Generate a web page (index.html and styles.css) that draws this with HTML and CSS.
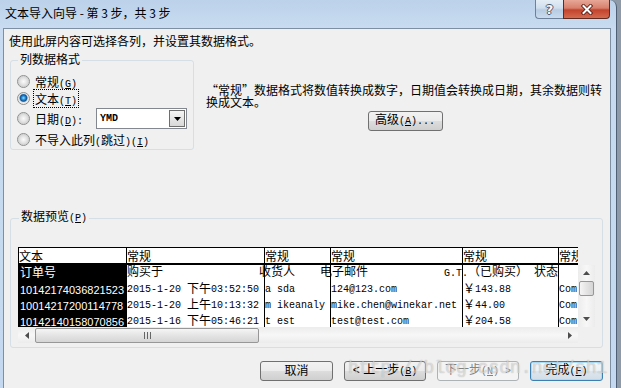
FILE: index.html
```html
<!DOCTYPE html>
<html lang="zh-CN">
<head>
    <meta charset="UTF-8">
    <meta name="viewport" content="width=device-width, initial-scale=1.0">
    <title>文本导入向导 - 第 3 步，共 3 步</title>
    <link rel="stylesheet" href="styles.css">
</head>
<body>

<div class="window">
    <div class="titlebar">
        <span class="title">文本导入向导 - 第 3 步，共 3 步</span>
        <div class="caption">
            <span class="cap-help">?</span>
            <span class="cap-close">
                <svg width="14" height="11" viewBox="0 0 14 11">
                    <path d="M3.5 2 L10.5 9 M10.5 2 L3.5 9" stroke="#5a1d15" stroke-width="3.8" stroke-linecap="square"/>
                    <path d="M3.5 2 L10.5 9 M10.5 2 L3.5 9" stroke="#fff" stroke-width="2" stroke-linecap="square"/>
                </svg>
            </span>
        </div>
    </div>

    <div class="client">
        <p class="intro">使用此屏内容可选择各列，并设置其数据格式。</p>

        <div class="format-row">
            <fieldset class="format-box">
                <legend>列数据格式</legend>
                <div class="opt">
                    <span class="radio"></span>
                    <span>常规<span class="key">(<u>G</u>)</span></span>
                </div>
                <div class="opt">
                    <span class="radio on"></span>
                    <span class="focus">文本<span class="key">(<u>T</u>)</span></span>
                </div>
                <div class="opt opt-date">
                    <span class="radio"></span>
                    <span class="date-label">日期<span class="key">(<u>D</u>):</span></span>
                    <div class="combo">
                        <span class="combo-text">YMD</span>
                        <span class="combo-btn">
                            <svg width="7" height="4" viewBox="0 0 7 4"><path d="M0 0h7L3.5 4z" fill="#000"/></svg>
                        </span>
                    </div>
                </div>
                <div class="opt opt-last">
                    <span class="radio"></span>
                    <span>不导入此列<span class="key">(</span>跳过<span class="key">)(<u>I</u>)</span></span>
                </div>
            </fieldset>

            <div class="format-note">
                <p>“常规”数据格式将数值转换成数字，日期值会转换成日期，其余数据则转<br>换成文本。</p>
                <button class="btn btn-adv">高级<span class="key">(<u>A</u>)...</span></button>
            </div>
        </div>

        <fieldset class="preview-box">
            <legend>数据预览<span class="key">(<u>P</u>)</span></legend>
            <div class="preview">
                <div class="preview-top">
                    <div class="grid-clip">
                        <div class="grid">
                            <div class="cell head">文本</div>
                            <div class="cell head">常规</div>
                            <div class="cell head">常规</div>
                            <div class="cell head">常规</div>
                            <div class="cell head">常规</div>
                            <div class="cell head">常规</div>

                            <div class="cell r1 sel"><span class="cj">订单号</span></div>
                            <div class="cell r1"><span class="cj">购买于</span><span class="cj push-recv">收货人</span></div>
                            <div class="cell r1"><span class="cj push-mail">电子邮件</span></div>
                            <div class="cell r1"><span class="push-gt">G.T.<span class="cj">（已购买）</span> <span class="cj">状态</span></span></div>
                            <div class="cell r1"></div>
                            <div class="cell r1"></div>

                            <div class="cell sel">10142174036821523</div>
                            <div class="cell">2015-1-20 <span class="cj">下午</span>03:52:50</div>
                            <div class="cell">a sda</div>
                            <div class="cell">124@123.com</div>
                            <div class="cell"><span class="cj">￥</span>143.88</div>
                            <div class="cell">Com</div>

                            <div class="cell sel">10014217200114778</div>
                            <div class="cell">2015-1-20 <span class="cj">上午</span>10:13:32</div>
                            <div class="cell">m ikeanaly</div>
                            <div class="cell">mike.chen@winekar.net</div>
                            <div class="cell"><span class="cj">￥</span>44.00</div>
                            <div class="cell">Com</div>

                            <div class="cell sel">10142140158070856</div>
                            <div class="cell">2015-1-16 <span class="cj">下午</span>05:46:21</div>
                            <div class="cell">t est</div>
                            <div class="cell">test@test.com</div>
                            <div class="cell"><span class="cj">￥</span>204.58</div>
                            <div class="cell">Com</div>
                        </div>
                    </div>
                    <div class="vscroll">
                        <span class="sb-arrow">
                            <svg width="7" height="4" viewBox="0 0 7 4"><path d="M0 4h7L3.5 0z" fill="#4d4d4d"/></svg>
                        </span>
                        <span class="vthumb"></span>
                        <span class="sb-fill"></span>
                        <span class="sb-arrow">
                            <svg width="7" height="4" viewBox="0 0 7 4"><path d="M0 0h7L3.5 4z" fill="#4d4d4d"/></svg>
                        </span>
                    </div>
                </div>
                <div class="preview-bottom">
                    <div class="hscroll">
                        <span class="sb-arrow h">
                            <svg width="4" height="7" viewBox="0 0 4 7"><path d="M4 0v7L0 3.5z" fill="#4d4d4d"/></svg>
                        </span>
                        <span class="hthumb">
                            <svg width="7" height="7" viewBox="0 0 7 7"><path d="M0.5 0v7M3.5 0v7M6.5 0v7" stroke="#666" stroke-width="1"/></svg>
                        </span>
                        <span class="sb-fill"></span>
                        <span class="sb-arrow h">
                            <svg width="4" height="7" viewBox="0 0 4 7"><path d="M0 0v7L4 3.5z" fill="#4d4d4d"/></svg>
                        </span>
                    </div>
                    <div class="sb-corner"></div>
                </div>
            </div>
        </fieldset>

        <div class="actions">
            <button class="btn btn-cancel">取消</button>
            <button class="btn btn-back">&lt; 上一步<span class="key">(<u>B</u>)</span></button>
            <button class="btn btn-next" disabled>下一步<span class="key">(<u>N</u>) &gt;</span></button>
            <button class="btn btn-finish">完成<span class="key">(<u>F</u>)</span></button>
        </div>

        <div class="watermark">http://blog.csdn.net/sh1</div>
    </div>
</div>

</body>
</html>
```

FILE: styles.css
```css
body {
    margin: 0;
    width: 621px;
    height: 388px;
    overflow: hidden;
    background-color: #8e9aa7;
    font-family: "Liberation Sans", "Noto Sans CJK SC", sans-serif;
    font-size: 12px;
    color: #000;
}

.window {
    width: 617px;
    height: 388px;
    box-sizing: border-box;
    border-right: 1px solid #4f6075;
    border-top-right-radius: 7px;
    background: linear-gradient(to bottom, #bcd2ea 0, #c8dbf0 28px, #c4d9ef 100%);
}

/* title bar */

.titlebar {
    height: 28px;
    display: flex;
    align-items: flex-start;
    padding: 0 6px 0 5px;
}

.title {
    padding-top: 6px;
    line-height: 14px;
    font-family: "Noto Sans CJK SC", sans-serif;
}

.caption {
    margin-left: auto;
    display: flex;
}

.cap-help,
.cap-close {
    height: 19px;
    box-sizing: border-box;
    display: flex;
    align-items: center;
    justify-content: center;
}

.cap-help {
    width: 28px;
    border: 1px solid #6d8198;
    border-top: none;
    border-right: none;
    border-bottom-left-radius: 4px;
    background: linear-gradient(to bottom, #e4edf6 0, #cfdeee 45%, #b7cbe2 55%, #c9dbee 100%);
    color: #f4f7fa;
    font-weight: bold;
    font-size: 13px;
    font-family: "DejaVu Sans", sans-serif;
    text-shadow: 1px 0 0 #4b5d72, -1px 0 0 #4b5d72, 0 1px 0 #4b5d72, 0 -1px 0 #4b5d72;
}

.cap-close {
    width: 47px;
    border: 1px solid #5e2a22;
    border-top: none;
    border-bottom-right-radius: 4px;
    background: linear-gradient(to bottom, #e7a797 0, #d7806c 45%, #c2432d 55%, #d46a4f 100%);
}

/* client area */

.client {
    position: relative;
    margin-left: 3px;
    width: 608px;
    height: 360px;
    box-sizing: border-box;
    border: 1px solid #7d8fa3;
    border-bottom: none;
    background-color: #f0f0f0;
}

.intro {
    margin: 0;
    padding: 6px 0 0 5px;
    line-height: 14px;
}

.key {
    font-family: "Liberation Mono", monospace;
    font-size: 10px;
}

.format-row {
    display: flex;
    align-items: flex-start;
    margin-top: 4px;
}

fieldset {
    margin: 0 0 0 6px;
    min-width: 0;
    box-sizing: border-box;
    border: 1px solid #d5dfe5;
    border-radius: 3px;
}

legend {
    margin-left: 1px;
    padding: 0 2px;
    line-height: 14px;
}

.format-box {
    width: 184px;
    padding: 6px 0 0 6px;
}

.opt {
    display: flex;
    align-items: center;
    height: 17px;
}

.opt-date {
    height: 23px;
}

.opt-last {
    height: 19px;
}

.radio {
    width: 13px;
    height: 13px;
    box-sizing: border-box;
    margin-right: 5px;
    border: 1px solid #8e8f8f;
    border-radius: 50%;
    background: radial-gradient(circle at 50% 50%, #fbfbfb 0, #e6e6e6 3px, #d4d4d4 5px, #f2f2f2 6px);
}

.radio.on {
    background: radial-gradient(circle at 50% 45%, #9fe0ff 0, #3196e0 1.6px, #0f5596 3.2px, #5a8bb8 3.8px, #e2e2e2 4.4px, #f2f2f2 6px);
}

.focus {
    margin-left: -2px;
    padding: 1px 2px;
    outline: 1px dotted #000;
    outline-offset: -1px;
}

.date-label {
    width: 61px;
}

.combo {
    width: 91px;
    height: 21px;
    box-sizing: border-box;
    display: flex;
    align-items: center;
    border: 1px solid #828790;
    background-color: #fff;
}

.combo-text {
    flex: 1;
    padding-left: 3px;
    font-family: "Liberation Mono", monospace;
    font-size: 10px;
    font-weight: bold;
}

.combo-btn {
    width: 16px;
    height: 17px;
    margin-right: 1px;
    box-sizing: border-box;
    display: flex;
    align-items: center;
    justify-content: center;
    border: 1px solid #6e6e6e;
    background: linear-gradient(to bottom, #f4f4f4, #d8d8d8);
}

.format-note {
    margin-left: 12px;
    padding-top: 31px;
    width: 398px;
}

.format-note p {
    margin: 0;
    line-height: 12px;
    white-space: nowrap;
    font-family: "Noto Sans CJK SC", sans-serif;
}

/* buttons */

.btn {
    height: 20px;
    padding: 0;
    box-sizing: border-box;
    border: 1px solid #707070;
    border-radius: 3px;
    background: linear-gradient(to bottom, #f2f2f2 0, #ebebeb 50%, #dddddd 51%, #cfcfcf 100%);
    font-family: "Liberation Sans", "Noto Sans CJK SC", sans-serif;
    font-size: 12px;
    line-height: 16px;
    color: #000;
}

.btn-adv {
    display: block;
    width: 75px;
    margin: 3px auto 0;
}

.actions {
    display: flex;
    justify-content: flex-end;
    gap: 11px;
    margin-top: 13px;
    padding-right: 7px;
}

.btn-cancel,
.btn-finish {
    width: 73px;
}

.btn-back,
.btn-next {
    width: 82px;
}

.btn-next {
    border-color: #adb2b5;
    background: #f4f4f4;
    color: #838383;
}

.btn-finish {
    border-color: #3c7fb1;
    box-shadow: inset 0 0 0 1px #a9dcf7;
    background: linear-gradient(to bottom, #f4f8fb 0, #eaf1f6 50%, #dde6ee 51%, #d2dde7 100%);
}

/* data preview */

.preview-box {
    width: 593px;
    margin-top: 60px;
    padding: 21px 0 4px 7px;
}

.preview {
    width: 577px;
}

.preview-top,
.preview-bottom {
    display: flex;
}

.grid-clip {
    width: 560px;
    height: 80px;
    overflow: hidden;
    background-color: #fff;
}

.grid {
    display: grid;
    grid-template-columns: 108px 138px 66px 132px 96px 60px;
    grid-template-rows: 18px 17px 16px 16px 16px;
}

.cell {
    border-left: 1px solid #000;
    white-space: nowrap;
    font-family: "Liberation Mono", "Noto Sans CJK SC", monospace;
    font-size: 10px;
    line-height: 16px;
}

.cj {
    font-family: "Noto Sans CJK SC", sans-serif;
    font-size: 12px;
    line-height: 8px;
    vertical-align: -1px;
}

.head {
    box-sizing: border-box;
    border-top: 1px solid #000;
    border-bottom: 2px solid #000;
    font-family: "Noto Sans CJK SC", sans-serif;
    font-size: 12px;
    line-height: 15px;
}

.r1 {
    line-height: 17px;
}

.r1 .cj {
    vertical-align: 0;
}

.sel {
    padding-left: 1px;
    background-color: #000;
    color: #fff;
    font-family: "Liberation Sans", sans-serif;
    font-size: 11px;
}

.push-recv {
    margin-left: 96px;
}

.push-mail {
    margin-left: 55px;
}

.push-gt {
    margin-left: 113px;
}

.vscroll {
    width: 17px;
    height: 62px;
    margin-top: 18px;
    display: flex;
    flex-direction: column;
    align-items: center;
    background: linear-gradient(to right, #ececec, #f7f7f7 50%, #ececec);
}

.hscroll {
    width: 560px;
    height: 16px;
    display: flex;
    align-items: center;
    background: linear-gradient(to bottom, #ececec, #f7f7f7 50%, #ececec);
}

.sb-arrow {
    width: 17px;
    height: 16px;
    flex: none;
    display: flex;
    align-items: center;
    justify-content: center;
}

.sb-fill {
    flex: 1;
}

.vthumb {
    width: 15px;
    height: 15px;
    box-sizing: border-box;
    border: 1px solid #979797;
    border-radius: 2px;
    background: linear-gradient(to right, #f5f5f5, #e4e4e4 50%, #d5d5d5);
}

.hthumb {
    width: 224px;
    height: 15px;
    box-sizing: border-box;
    display: flex;
    align-items: center;
    justify-content: center;
    border: 1px solid #979797;
    border-radius: 2px;
    background: linear-gradient(to bottom, #f5f5f5, #e4e4e4 50%, #d5d5d5);
}

.sb-corner {
    width: 17px;
    height: 16px;
    background-color: #f0f0f0;
}

.watermark {
    position: absolute;
    left: 344px;
    top: 329px;
    font-family: "Liberation Mono", monospace;
    font-size: 18px;
    line-height: 20px;
    color: rgba(255, 255, 255, 0.5);
    text-shadow: 0 0 1px rgba(80, 80, 80, 0.45);
    pointer-events: none;
}
```
